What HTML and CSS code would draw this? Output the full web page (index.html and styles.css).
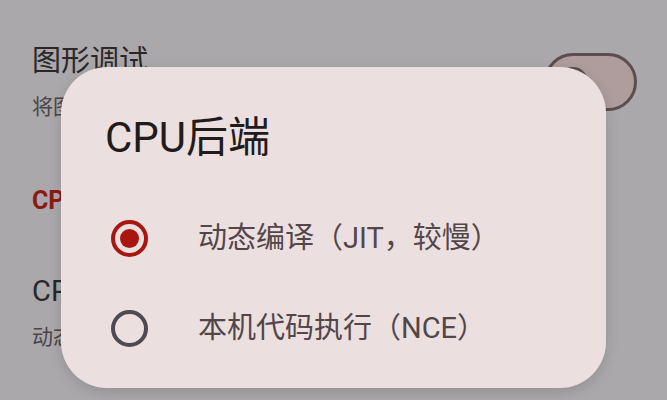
FILE: index.html
```html
<!DOCTYPE html>
<html lang="zh-CN">
<head>
<meta charset="utf-8">
<link rel="stylesheet" href="styles.css">
</head>
<body>
<div class="settings">
  <div class="pref-row">
    <div class="pref-text">
      <div class="pref-title">图形调试</div>
      <div class="pref-summary">将图形API调用记录到日志中</div>
    </div>
    <div class="switch"><span class="thumb"></span></div>
  </div>
  <div class="category">CPU</div>
  <div class="pref-row">
    <div class="pref-text">
      <div class="pref-title">CPU后端</div>
      <div class="pref-summary">动态编译（JIT，较慢）</div>
    </div>
  </div>
</div>

<div class="dialog">
  <div class="dialog-title">CPU后端</div>
  <div class="option">
    <span class="radio checked"></span>
    <span class="option-label">动态编译（JIT，较慢）</span>
  </div>
  <div class="option">
    <span class="radio"></span>
    <span class="option-label">本机代码执行（NCE）</span>
  </div>
</div>
</body>
</html>
```

FILE: styles.css
```css
html, body {
  margin: 0;
  padding: 0;
}
body {
  width: 667px;
  height: 400px;
  overflow: hidden;
  background: #aaa8ab;
  font-family: Roboto, "Noto Sans CJK SC", sans-serif;
  position: relative;
}
.settings {
  padding: 43px 30px 0 32px;
}
.pref-row {
  display: flex;
  align-items: center;
  justify-content: space-between;
}
.pref-title {
  font-size: 29px;
  line-height: 36px;
  color: #2b2729;
}
.pref-summary {
  font-size: 21px;
  line-height: 28px;
  margin-top: 14px;
  color: #4a4548;
}
.switch {
  box-sizing: border-box;
  width: 93px;
  height: 58px;
  border: 3px solid #5b4d50;
  border-radius: 29px;
  background: #ae9d9c;
  display: flex;
  align-items: center;
  padding-left: 11px;
}
.thumb {
  width: 30px;
  height: 30px;
  border-radius: 50%;
  background: #5b4d50;
}
.category {
  margin-top: 65px;
  font-size: 25px;
  line-height: 30px;
  font-weight: bold;
  color: #8c1a14;
}
.category + .pref-row {
  margin-top: 57px;
}
.dialog {
  position: absolute;
  left: 61px;
  top: 67px;
  width: 545px;
  height: 321px;
  box-sizing: border-box;
  padding: 46px 0 0 44px;
  background: #ecdfe0;
  border-radius: 46px;
  box-shadow: 0 4px 14px rgba(0, 0, 0, 0.14);
}
.dialog-title {
  font-size: 42px;
  line-height: 50px;
  color: #221b1c;
}
.option {
  height: 90px;
  display: flex;
  align-items: center;
}
.dialog-title + .option {
  margin-top: 30px;
}
.radio {
  box-sizing: border-box;
  width: 37px;
  height: 37px;
  margin-left: 6px;
  border-radius: 50%;
  border: 4px solid #4f4a52;
  display: flex;
  align-items: center;
  justify-content: center;
  flex: none;
}
.radio.checked {
  border-color: #a8160f;
}
.radio.checked::after {
  content: "";
  width: 19px;
  height: 19px;
  border-radius: 50%;
  background: #a8160f;
}
.option-label {
  margin-left: 50px;
  font-size: 29px;
  line-height: 36px;
  color: #524649;
}
```
